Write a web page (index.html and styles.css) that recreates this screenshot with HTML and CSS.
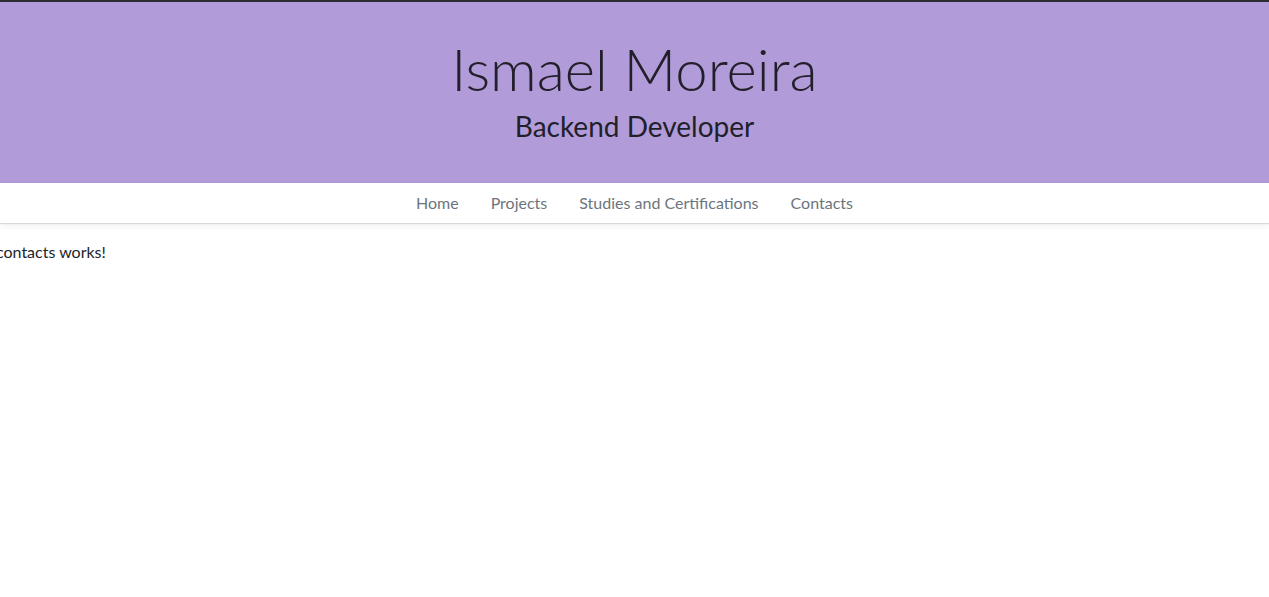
FILE: index.html
```html
<!DOCTYPE html>
<html lang="en">
<head>
<meta charset="utf-8">
<title>Ismael Moreira</title>
<link rel="stylesheet" href="styles.css">
</head>
<body>
<header class="hero">
  <h1 class="hero-title">Ismael Moreira</h1>
  <p class="hero-subtitle">Backend Developer</p>
</header>
<nav class="nav">
  <a class="nav-link" href="#">Home</a>
  <a class="nav-link" href="#">Projects</a>
  <a class="nav-link" href="#">Studies and Certifications</a>
  <a class="nav-link" href="#">Contacts</a>
</nav>
<main class="content">
  <p class="content-text">contacts works!</p>
</main>
</body>
</html>
```

FILE: styles.css
```css
* { box-sizing: border-box; }
html, body { margin: 0; padding: 0; }
body {
  font-family: Lato, "Open Sans", sans-serif;
  font-size: 16px;
  line-height: 1.5;
  color: #212529;
  background: #fff;
  overflow: hidden;
}
.hero {
  background: #b19cd9;
  border-top: 2px solid #2e2c33;
  height: 183px;
  padding-top: 32px;
  text-align: center;
  color: #221f2b;
}
.hero-title {
  margin: 0;
  font-weight: 300;
  font-size: 58px;
  line-height: 70px;
}
.hero-subtitle {
  margin: 4px 0 0;
  font-weight: 400;
  font-size: 28px;
  line-height: 36px;
}
.nav {
  display: flex;
  justify-content: center;
  height: 40px;
  align-items: center;
  background: #fff;
  box-shadow: 0 1px 1px rgba(0,0,0,0.12), 0 3px 8px rgba(0,0,0,0.06);
  position: relative;
}
.nav-link {
  padding: 8px 16px;
  color: #6c757d;
  text-decoration: none;
  font-size: 16px;
}
.content {
  padding-top: 17px;
}
.content-text {
  margin: 0 0 0 -4px;
}
```
